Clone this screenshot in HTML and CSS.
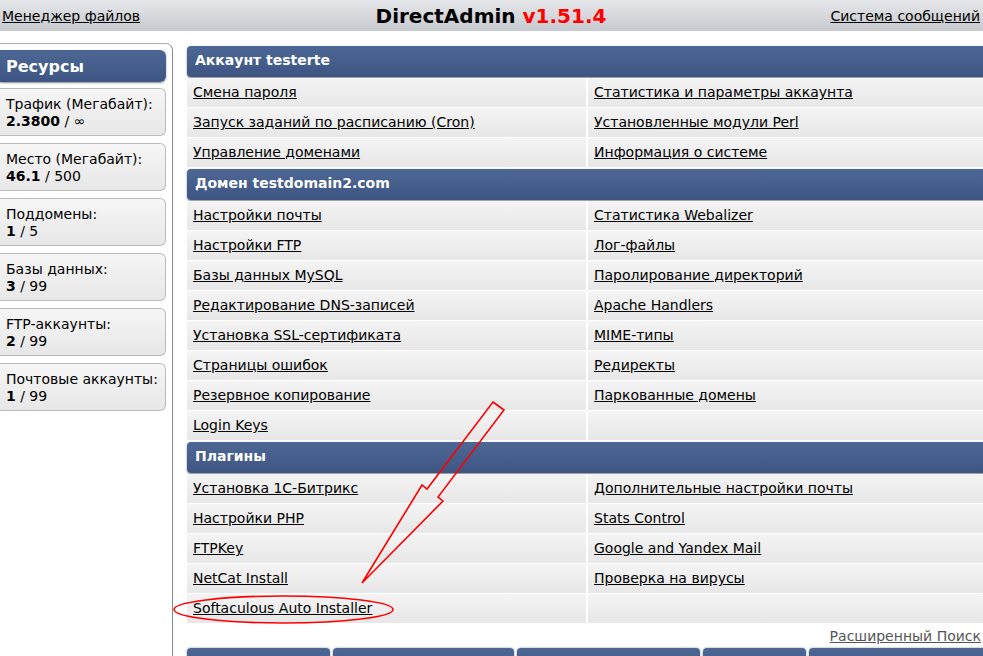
FILE: index.html
```html
<!DOCTYPE html>
<html>
<head>
    <meta charset="utf-8">
    <title>DirectAdmin</title>
    <link rel="stylesheet" href="styles.css">
</head>
<body>
    <div class="topbar">
        <a href="#" class="top-link">Менеджер файлов</a>
        <div class="brand">DirectAdmin <span class="version">v1.51.4</span></div>
        <a href="#" class="top-link right">Система сообщений</a>
    </div>

    <div class="layout">
        <div class="sidebar">
            <div class="side-title">Ресурсы</div>
            <div class="stat">Трафик (Мегабайт):<br><b>2.3800</b> / ∞</div>
            <div class="stat">Место (Мегабайт):<br><b>46.1</b> / 500</div>
            <div class="stat">Поддомены:<br><b>1</b> / 5</div>
            <div class="stat">Базы данных:<br><b>3</b> / 99</div>
            <div class="stat">FTP-аккаунты:<br><b>2</b> / 99</div>
            <div class="stat">Почтовые аккаунты:<br><b>1</b> / 99</div>
        </div>

        <div class="main">
            <div class="section-title">Аккаунт testerte</div>
            <div class="links">
                <a href="#">Смена пароля</a>
                <a href="#">Статистика и параметры аккаунта</a>
                <a href="#">Запуск заданий по расписанию (Cron)</a>
                <a href="#">Установленные модули Perl</a>
                <a href="#">Управление доменами</a>
                <a href="#">Информация о системе</a>
            </div>

            <div class="section-title">Домен testdomain2.com</div>
            <div class="links">
                <a href="#">Настройки почты</a>
                <a href="#">Статистика Webalizer</a>
                <a href="#">Настройки FTP</a>
                <a href="#">Лог-файлы</a>
                <a href="#">Базы данных MySQL</a>
                <a href="#">Паролирование директорий</a>
                <a href="#">Редактирование DNS-записей</a>
                <a href="#">Apache Handlers</a>
                <a href="#">Установка SSL-сертификата</a>
                <a href="#">MIME-типы</a>
                <a href="#">Страницы ошибок</a>
                <a href="#">Редиректы</a>
                <a href="#">Резервное копирование</a>
                <a href="#">Паркованные домены</a>
                <a href="#">Login Keys</a>
                <span></span>
            </div>

            <div class="section-title">Плагины</div>
            <div class="links">
                <a href="#">Установка 1С-Битрикс</a>
                <a href="#">Дополнительные настройки почты</a>
                <a href="#">Настройки PHP</a>
                <a href="#">Stats Control</a>
                <a href="#">FTPKey</a>
                <a href="#">Google and Yandex Mail</a>
                <a href="#">NetCat Install</a>
                <a href="#">Проверка на вирусы</a>
                <a href="#">Softaculous Auto Installer</a>
                <span></span>
            </div>

            <div class="search-row"><a href="#" class="search-link">Расширенный Поиск</a></div>

            <div class="tabs">
                <div class="tab w1"></div>
                <div class="tab w2"></div>
                <div class="tab w3"></div>
                <div class="tab w4"></div>
                <div class="tab w5"></div>
            </div>
        </div>
    </div>

    <svg class="marks" width="983" height="656" viewBox="0 0 983 656">
        <polygon points="493,402 504,410 438,497 443,501 362,583 422,485 427,489"
                 fill="none" stroke="#ff0000" stroke-width="1.6" stroke-linejoin="miter"/>
        <ellipse cx="283.5" cy="609.5" rx="109.5" ry="13.5"
                 fill="none" stroke="#ff0000" stroke-width="1.6"/>
    </svg>
</body>
</html>
```

FILE: styles.css
```css
* {
    box-sizing: border-box;
}

html, body {
    margin: 0;
    height: 100%;
    overflow: hidden;
}

body {
    position: relative;
    font-family: "DejaVu Sans", Verdana, sans-serif;
    font-size: 13px;
    color: #000;
    background: #fff;
}

a {
    color: #000;
}

.topbar {
    height: 31px;
    display: grid;
    grid-template-columns: 1fr auto 1fr;
    align-items: center;
    padding: 0 3px 0 2px;
    background: linear-gradient(#e6e7ea, #c6c9ce);
}

.top-link {
    font-size: 14px;
    justify-self: start;
}

.top-link.right {
    justify-self: end;
}

.brand {
    font-size: 20px;
    font-weight: bold;
}

.version {
    color: #f00;
}

.layout {
    display: flex;
    margin-top: 12px;
}

.sidebar {
    width: 173px;
    height: 613px;
    flex-shrink: 0;
    border-top: 1px solid #aaa;
    border-right: 1px solid #888;
    border-top-right-radius: 7px;
    padding: 6px 6px 0 0;
    display: flex;
    flex-direction: column;
    gap: 7px;
}

.side-title {
    height: 32px;
    margin-bottom: -1px;
    padding: 7px 6px 0;
    color: #fff;
    font-size: 16px;
    font-weight: bold;
    border-radius: 0 6px 6px 0;
    background: linear-gradient(#4d6794, #3e5583);
    box-shadow: 0 1px 2px rgba(0, 0, 0, 0.45);
}

.stat {
    height: 48px;
    padding: 7px 6px 0;
    font-size: 14px;
    line-height: 17px;
    border: 1px solid #bbb;
    border-left: none;
    border-radius: 0 6px 6px 0;
    background: linear-gradient(#f6f6f6, #e7e7e7);
}

.main {
    width: 802px;
    flex-shrink: 0;
    margin-left: 14px;
    padding-top: 2px;
}

.section-title {
    height: 31px;
    margin-top: 1px;
    padding: 6px 8px 0;
    color: #fff;
    font-size: 14px;
    font-weight: bold;
    border-radius: 4px;
    background: linear-gradient(#4d6794, #3e5583);
    box-shadow: 0 1px 2px rgba(0, 0, 0, 0.5);
}

.links {
    display: grid;
    grid-template-columns: 401px 1fr;
    margin-top: 1px;
}

.links a,
.links span {
    height: 30px;
    padding: 6px 6px 0;
    font-size: 14px;
    border-bottom: 1px solid #fff;
    background: linear-gradient(#f4f4f4, #e7e7e7);
}

.links > :nth-child(odd) {
    border-right: 2px solid #fff;
}

.search-row {
    text-align: right;
    padding: 4px 8px 0 0;
    height: 24px;
}

.search-link {
    color: #555;
    font-size: 14px;
}

.tabs {
    display: flex;
    gap: 3px;
}

.tab {
    height: 30px;
    border-radius: 4px 4px 0 0;
    background: linear-gradient(#4d6794, #3e5583);
    box-shadow: 0 0 2px rgba(0, 0, 0, 0.5);
}

.w1 { width: 143px; }
.w2 { width: 181px; }
.w3 { width: 183px; }
.w4 { width: 103px; }
.w5 { width: 180px; }

.marks {
    position: absolute;
    left: 0;
    top: 0;
    pointer-events: none;
}
```
